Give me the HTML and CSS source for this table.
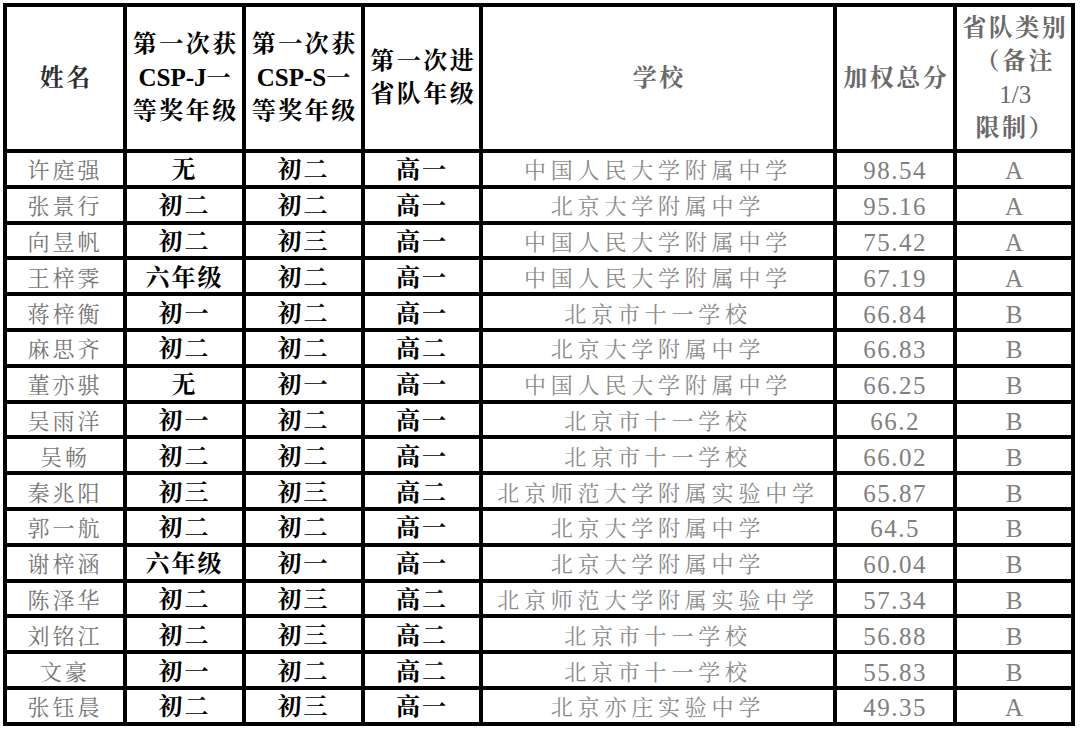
FILE: index.html
```html
<!DOCTYPE html>
<html lang="zh-CN">
<head>
<meta charset="utf-8">
<title>省队名单</title>
<link rel="stylesheet" href="styles.css">
</head>
<body>
<table class="sheet">
  <colgroup>
    <col class="w-name"><col class="w-grade"><col class="w-grade2"><col class="w-grade3"><col class="w-school"><col class="w-score"><col class="w-cat">
  </colgroup>
  <thead>
    <tr class="head">
      <th class="h-name">姓名</th>
      <th class="h-grade">第一次获<br><span class="lat">CSP-J</span>一<br>等奖年级</th>
      <th class="h-grade">第一次获<br><span class="lat">CSP-S</span>一<br>等奖年级</th>
      <th class="h-grade">第一次进<br>省队年级</th>
      <th class="h-gray">学校</th>
      <th class="h-gray">加权总分</th>
      <th class="h-gray h-cat">省队类别<br>（备注<br><span class="frac">1/3</span><br>限制）</th>
    </tr>
  </thead>
  <tbody>
    <tr class="row"><td class="name">许庭强</td><td class="grade">无</td><td class="grade">初二</td><td class="grade">高一</td><td class="school">中国人民大学附属中学</td><td class="score">98.54</td><td class="cat">A</td></tr>
    <tr class="row"><td class="name">张景行</td><td class="grade">初二</td><td class="grade">初二</td><td class="grade">高一</td><td class="school">北京大学附属中学</td><td class="score">95.16</td><td class="cat">A</td></tr>
    <tr class="row"><td class="name">向昱帆</td><td class="grade">初二</td><td class="grade">初三</td><td class="grade">高一</td><td class="school">中国人民大学附属中学</td><td class="score">75.42</td><td class="cat">A</td></tr>
    <tr class="row"><td class="name">王梓霁</td><td class="grade">六年级</td><td class="grade">初二</td><td class="grade">高一</td><td class="school">中国人民大学附属中学</td><td class="score">67.19</td><td class="cat">A</td></tr>
    <tr class="row"><td class="name">蒋梓衡</td><td class="grade">初一</td><td class="grade">初二</td><td class="grade">高一</td><td class="school">北京市十一学校</td><td class="score">66.84</td><td class="cat">B</td></tr>
    <tr class="row"><td class="name">麻思齐</td><td class="grade">初二</td><td class="grade">初二</td><td class="grade">高二</td><td class="school">北京大学附属中学</td><td class="score">66.83</td><td class="cat">B</td></tr>
    <tr class="row"><td class="name">董亦骐</td><td class="grade">无</td><td class="grade">初一</td><td class="grade">高一</td><td class="school">中国人民大学附属中学</td><td class="score">66.25</td><td class="cat">B</td></tr>
    <tr class="row"><td class="name">吴雨洋</td><td class="grade">初一</td><td class="grade">初二</td><td class="grade">高一</td><td class="school">北京市十一学校</td><td class="score">66.2</td><td class="cat">B</td></tr>
    <tr class="row"><td class="name">吴畅</td><td class="grade">初二</td><td class="grade">初二</td><td class="grade">高一</td><td class="school">北京市十一学校</td><td class="score">66.02</td><td class="cat">B</td></tr>
    <tr class="row"><td class="name">秦兆阳</td><td class="grade">初三</td><td class="grade">初三</td><td class="grade">高二</td><td class="school">北京师范大学附属实验中学</td><td class="score">65.87</td><td class="cat">B</td></tr>
    <tr class="row"><td class="name">郭一航</td><td class="grade">初二</td><td class="grade">初二</td><td class="grade">高一</td><td class="school">北京大学附属中学</td><td class="score">64.5</td><td class="cat">B</td></tr>
    <tr class="row"><td class="name">谢梓涵</td><td class="grade">六年级</td><td class="grade">初一</td><td class="grade">高一</td><td class="school">北京大学附属中学</td><td class="score">60.04</td><td class="cat">B</td></tr>
    <tr class="row"><td class="name">陈泽华</td><td class="grade">初二</td><td class="grade">初三</td><td class="grade">高二</td><td class="school">北京师范大学附属实验中学</td><td class="score">57.34</td><td class="cat">B</td></tr>
    <tr class="row"><td class="name">刘铭江</td><td class="grade">初二</td><td class="grade">初三</td><td class="grade">高二</td><td class="school">北京市十一学校</td><td class="score">56.88</td><td class="cat">B</td></tr>
    <tr class="row"><td class="name">文豪</td><td class="grade">初一</td><td class="grade">初二</td><td class="grade">高二</td><td class="school">北京市十一学校</td><td class="score">55.83</td><td class="cat">B</td></tr>
    <tr class="row"><td class="name">张钰晨</td><td class="grade">初二</td><td class="grade">初三</td><td class="grade">高一</td><td class="school">北京亦庄实验中学</td><td class="score">49.35</td><td class="cat">A</td></tr>
  </tbody>
</table>
</body>
</html>
```
FILE: styles.css
```css
html, body {
  margin: 0;
  padding: 0;
  background: #ffffff;
}

.sheet {
  border-collapse: collapse;
  table-layout: fixed;
  width: 1072px;
  margin: 3px 0 0 3px;
  font-family: "Liberation Serif", "Noto Serif CJK SC", "Noto Sans CJK SC", serif;
}

.w-name { width: 120px; }
.w-grade { width: 119px; }
.w-grade2 { width: 119px; }
.w-grade3 { width: 118px; }
.w-school { width: 354px; }
.w-score { width: 120px; }
.w-cat { width: 118px; }

.sheet th,
.sheet td {
  border: 4px solid #000;
  padding: 0;
  text-align: center;
  vertical-align: middle;
  white-space: nowrap;
  overflow: hidden;
}

.head { height: 146px; }
.row { height: 35.8px; }

.sheet th {
  font-size: 24px;
  font-weight: 700;
  line-height: 33px;
  letter-spacing: 2.5px;
  padding-left: 2.5px;
}

.lat {
  letter-spacing: 0;
  font-size: 25px;
}

.frac {
  letter-spacing: 0;
  font-weight: 400;
  font-size: 25px;
}

.h-name { color: #2e2e2e; }
.h-grade { color: #000; }
.h-gray { color: #6a6a6a; }
.h-cat { line-height: 35px; }

.sheet td {
  line-height: 27px;
  padding-top: 4px;
}

.name {
  font-size: 22px;
  color: #767676;
  letter-spacing: 3px;
  padding-left: 3px;
}

.grade {
  font-size: 24px;
  font-weight: 700;
  color: #000;
  letter-spacing: 2px;
  padding-left: 2px;
}

.school {
  font-size: 22px;
  color: #8a8a8a;
  letter-spacing: 4.8px;
  padding-left: 4.8px;
}

.score {
  font-size: 25px;
  color: #808080;
  letter-spacing: 1.5px;
  padding-left: 1.5px;
}

.cat {
  font-size: 25px;
  color: #808080;
}
```
